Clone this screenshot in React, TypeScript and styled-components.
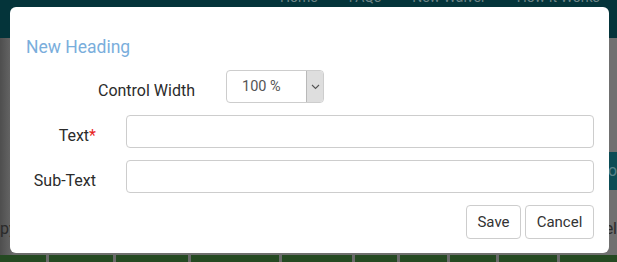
import React from "react";
import styled, { createGlobalStyle } from "styled-components";

const Global = createGlobalStyle`
  html, body { margin: 0; padding: 0; width: 617px; height: 262px; overflow: hidden; }
  body { font-family: Roboto, "Liberation Sans", sans-serif; background: #6f6f6f; }
  * { box-sizing: border-box; }
`;

const Page = styled.div`
  width: 617px;
  height: 262px;
  display: flex;
  flex-direction: column;
  background: linear-gradient(to right, #4e4e4e 0px, #6b6b6b 14px, #707070 60px);
`;

const TopBar = styled.header`
  height: 38px;
  background: #04343a;
  display: flex;
  gap: 31px;
  padding-left: 280px;
  overflow: hidden;
`;

const NavLink = styled.span`
  color: #6c8285;
  font-size: 14px;
  line-height: 18px;
  margin-top: -12px;
  white-space: nowrap;
  flex-shrink: 0;
`;

const Body = styled.main`
  flex: 1;
  display: flex;
  flex-direction: column;
  justify-content: flex-end;
  position: relative;
`;

const SideRow = styled.div`
  display: flex;
  justify-content: space-between;
  align-items: center;
  height: 22px;
  margin-bottom: 16px;
  color: #2a2a2a;
  font-size: 16px;
`;

const TealTab = styled.div`
  position: absolute;
  right: 0;
  top: 114px;
  width: 16px;
  height: 38px;
  background: #0d4c55;
  color: #5b8288;
  font-size: 16px;
  line-height: 38px;
  padding-left: 2px;
  overflow: hidden;
`;

const GreenRow = styled.footer`
  height: 7px;
  display: flex;
  gap: 3px;
  background: #6a6a6a;
`;

const GreenCell = styled.div<{ $w: number }>`
  width: ${(p) => p.$w}px;
  background: #254a22;
`;

const Modal = styled.div`
  position: fixed;
  left: 10px;
  top: 7px;
  width: 599px;
  height: 246px;
  background: #fff;
  border-radius: 6px;
  padding: 29px 15px 0 16px;
  display: flex;
  flex-direction: column;
`;

const Heading = styled.h4`
  margin: 0;
  font-size: 17.5px;
  font-weight: 400;
  color: #7aaedc;
  line-height: 22px;
  height: 34px;
`;

const WidthRow = styled.div`
  display: flex;
  align-items: center;
  gap: 31px;
  height: 33px;
`;

const FieldRow = styled.div`
  display: flex;
  align-items: center;
  gap: 16px;
  height: 33px;
  margin-top: 12px;
`;

const Label = styled.label<{ $w: number; $pad?: number }>`
  width: ${(p) => p.$w}px;
  text-align: right;
  padding-right: ${(p) => p.$pad ?? 0}px;
  margin-top: 7px;
  font-size: 16px;
  color: #2b2b2b;
  flex-shrink: 0;
  white-space: nowrap;
`;

const Req = styled.span`
  color: #e8231d;
`;

const Select = styled.div`
  width: 98px;
  height: 33px;
  border: 1px solid #cdcdcd;
  border-radius: 4px;
  display: flex;
  overflow: hidden;
`;

const SelectValue = styled.span`
  flex: 1;
  padding-left: 15px;
  font-size: 14.5px;
  color: #555;
  line-height: 31px;
`;

const SelectButton = styled.span`
  width: 17px;
  background: #dedede;
  border-left: 1px solid #b9b9b9;
  display: flex;
  align-items: center;
  justify-content: center;
`;

const Input = styled.input`
  flex: 1;
  height: 33px;
  border: 1px solid #cdcdcd;
  border-radius: 4px;
  background: #fff;
  outline: none;
`;

const Actions = styled.div`
  display: flex;
  justify-content: flex-end;
  gap: 4px;
  margin-top: 12px;
`;

const Button = styled.button<{ $w: number }>`
  width: ${(p) => p.$w}px;
  height: 34px;
  border: 1px solid #cdcdcd;
  border-radius: 4px;
  background: #fff;
  font-family: Roboto, "Liberation Sans", sans-serif;
  font-size: 15px;
  color: #333;
  padding: 0;
`;

const cells = [48, 67, 75, 92, 73, 44, 49, 48, 60, 60];

export default function App() {
  return (
    <>
      <Global />
      <Page>
        <TopBar>
          <NavLink>Home</NavLink>
          <NavLink>FAQs</NavLink>
          <NavLink>New Waiver</NavLink>
          <NavLink>How It Works</NavLink>
          <NavLink>Login</NavLink>
        </TopBar>
        <Body>
          <TealTab>to</TealTab>
          <SideRow>
            <span>py</span>
            <span>el</span>
          </SideRow>
        </Body>
        <GreenRow>
          {cells.map((w, i) => (
            <GreenCell key={i} $w={w} />
          ))}
        </GreenRow>
      </Page>
      <Modal>
        <Heading>New Heading</Heading>
        <WidthRow>
          <Label $w={169}>Control Width</Label>
          <Select>
            <SelectValue>100 %</SelectValue>
            <SelectButton>
              <svg width="9" height="6" viewBox="0 0 9 6">
                <path d="M1 1l3.5 3.5L8 1" fill="none" stroke="#555" strokeWidth="1.1" />
              </svg>
            </SelectButton>
          </Select>
        </WidthRow>
        <FieldRow>
          <Label $w={84} $pad={14}>
            Text<Req>*</Req>
          </Label>
          <Input />
        </FieldRow>
        <FieldRow>
          <Label $w={84} $pad={14}>
            Sub-Text
          </Label>
          <Input />
        </FieldRow>
        <Actions>
          <Button $w={55}>Save</Button>
          <Button $w={69}>Cancel</Button>
        </Actions>
      </Modal>
    </>
  );
}
